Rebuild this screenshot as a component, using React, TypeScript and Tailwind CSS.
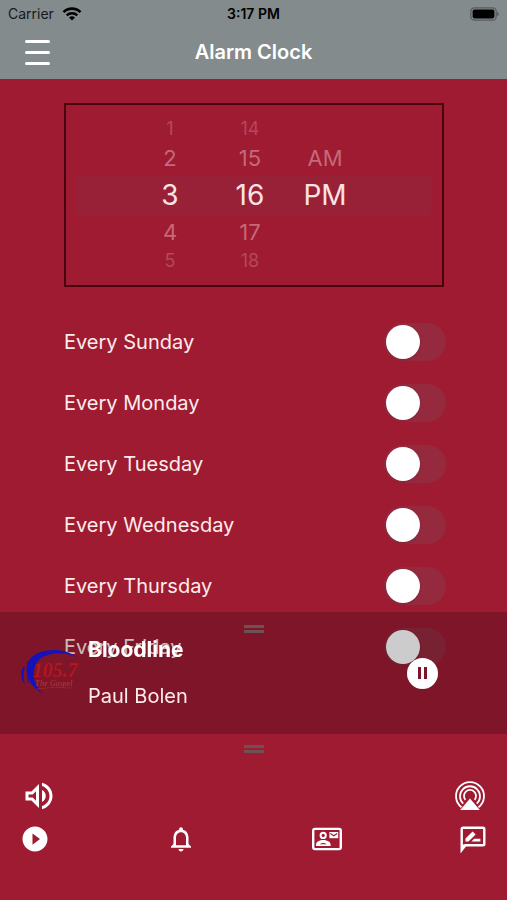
import { useState } from "react";
import {
  MdNotificationsNone,
  MdOutlineVolumeUp,
  MdPlayCircleFilled,
} from "react-icons/md";

const DAYS = ["Sunday", "Monday", "Tuesday", "Wednesday", "Thursday", "Friday"];

const WHEELS = [
  { label: "Hour", width: "w-20", values: ["1", "2", "3", "4", "5"] },
  { label: "Minute", width: "w-20", values: ["14", "15", "16", "17", "18"] },
  { label: "Period", width: "w-[70px]", values: ["", "AM", "PM", "", ""] },
];

const WHEEL_ROWS = [
  "h-6 text-lg text-[#b5485b]",
  "h-[34px] text-[22px] text-[#c5697a]",
  "h-10 text-[28px] text-[#fbe3e4]",
  "h-[34px] text-[22px] text-[#c5697a]",
  "h-6 text-lg text-[#b5485b]",
];

function StatusBar() {
  return (
    <div className="grid h-[27px] grid-cols-3 items-center px-2 text-sm text-[#15191b]">
      <div className="flex items-center gap-2">
        <span>Carrier</span>
        <svg className="h-[14px] w-[20px]" viewBox="0 0 20 14" fill="none" stroke="#000" aria-label="Wi-Fi">
          <path d="M1.5 5.2 A12 12 0 0 1 18.5 5.2" strokeWidth="2.6" />
          <path d="M4.7 8.4 A7.6 7.6 0 0 1 15.3 8.4" strokeWidth="2.4" />
          <path d="M10 13.5 L7 10.6 A4.4 4.4 0 0 1 13 10.6 Z" fill="#000" stroke="none" />
        </svg>
      </div>
      <span className="text-center font-semibold text-black">3:17 PM</span>
      <svg className="h-[14px] w-[30px] justify-self-end" viewBox="0 0 30 14" aria-label="Battery full">
        <rect x="1.8" y="0.8" width="25.4" height="12.4" rx="3.6" fill="none" stroke="#555c5e" strokeWidth="1.3" />
        <rect x="3.6" y="2.6" width="21.8" height="8.8" rx="1.8" fill="#000" />
        <path d="M28.2 4.8 Q30 5.6 30 7 Q30 8.4 28.2 9.2 Z" fill="#555c5e" />
      </svg>
    </div>
  );
}

function TimePicker() {
  return (
    <div className="relative mr-[2px] flex justify-center border-2 border-[#4a0410] py-3 pr-[18px]">
      <div className="absolute inset-x-[10px] top-[70px] h-[41px] rounded-md bg-[#982138]" />
      {WHEELS.map((wheel) => (
        <ul key={wheel.label} role="listbox" aria-label={wheel.label} className={`relative ${wheel.width}`}>
          {wheel.values.map((value, i) => (
            <li
              key={i}
              role="option"
              aria-selected={i === 2}
              className={`flex items-center justify-center ${WHEEL_ROWS[i]}`}
            >
              {value}
            </li>
          ))}
        </ul>
      ))}
    </div>
  );
}

function DayRow({ day }: { day: string }) {
  const [on, setOn] = useState(false);
  return (
    <li>
      <label className="flex h-[61px] items-center justify-between text-xl text-[#fdecec]">
        Every {day}
        <input
          type="checkbox"
          role="switch"
          checked={on}
          onChange={(e) => setOn(e.target.checked)}
          className="h-[38px] w-[62px] appearance-none rounded-full bg-[#952a3f] p-[2px] before:block before:size-[34px] before:rounded-full before:bg-white before:shadow-sm checked:bg-green-500 checked:before:ml-6"
        />
      </label>
    </li>
  );
}

function Grip() {
  return (
    <div className="mx-auto flex w-5 flex-col gap-[2px]">
      <div className="h-[3px] bg-[#6e5154]" />
      <div className="h-[3px] bg-[#6e5154]" />
    </div>
  );
}

function StationLogo() {
  return (
    <svg className="h-12 w-[60px] shrink-0" viewBox="0 0 60 48" aria-label="105.7 The Gospel">
      <path d="M56 8 C46 -1 20 -2 10 10 C2 20 8 38 24 45 C13 36 11 24 17 13 C25 3 44 2 56 8 Z" fill="#1512b8" />
      <path d="M3 18 C0 24 1 31 5 35 C3 29 3 24 5 18 Z" fill="#1512b8" />
      <path d="M8 12 V34" stroke="#1512b8" strokeWidth="1" />
      <text x="13" y="28" fontSize="20" fontStyle="italic" fontWeight="bold" fontFamily="Liberation Serif, serif" fill="#b8161f">105.7</text>
      <text x="15" y="37" fontSize="8" fontStyle="italic" fontWeight="bold" fontFamily="Liberation Serif, serif" fill="#a3303a">The Gospel</text>
      <path d="M17 40 Q34 37 52 39" stroke="#a3202c" strokeWidth="1" fill="none" />
    </svg>
  );
}

function NowPlaying() {
  return (
    <section className="h-[122px] bg-black/20 pt-[13px]">
      <Grip />
      <div className="mt-[3px] flex items-center pl-5 pr-[69px] text-xl text-[#fdecec]">
        <StationLogo />
        <div className="ml-2 flex flex-1 flex-col gap-[18px]">
          <p className="text-[21px] leading-7 font-bold text-white">Bloodline</p>
          <p>Paul Bolen</p>
        </div>
        <button aria-label="Pause" className="flex size-[31px] items-center justify-center gap-[3px] rounded-full bg-white">
          <span className="h-3 w-[3px] bg-[#7c1626]" />
          <span className="h-3 w-[3px] bg-[#7c1626]" />
        </button>
      </div>
    </section>
  );
}

function AirPlayIcon() {
  return (
    <svg className="size-9" viewBox="0 0 36 36" fill="none" stroke="currentColor" strokeWidth="1.8">
      <path d="M9.5 29.2 A14 14 0 1 1 26.5 29.2" />
      <path d="M11.2 25.6 A10 10 0 1 1 24.8 25.6" />
      <path d="M13.4 21.8 A6 6 0 1 1 22.6 21.8" />
      <path d="M18 20.4 L27.8 32 H8.2 Z" fill="currentColor" stroke="none" />
    </svg>
  );
}

function ContactIcon() {
  return (
    <svg className="size-[30px]" viewBox="0 0 30 30" fill="currentColor">
      <rect x="1.2" y="4.9" width="27.6" height="20.2" rx="1.8" fill="none" stroke="currentColor" strokeWidth="2.4" />
      <circle cx="11.2" cy="11.4" r="2.6" fill="none" stroke="currentColor" strokeWidth="2" />
      <path d="M4 22 V20.6 C4 17.6 8 16 11.2 16 C14.4 16 18.6 17.6 18.6 20.6 V22 Z" />
      <path d="M7.6 20.2 Q11.2 17.6 14.8 20.2 Z" fill="#9f1b32" />
      <path d="M17.4 8 H26.2 V14.2 H17.4 Z" />
      <path d="M18.4 9.4 L21.8 11.8 L25.2 9.4" fill="none" stroke="#9f1b32" strokeWidth="1.2" />
    </svg>
  );
}

function ReviewIcon() {
  return (
    <svg className="size-[30px]" viewBox="0 0 30 30" fill="currentColor">
      <path d="M3.7 26 V5 Q3.7 3.7 5 3.7 H25 Q26.3 3.7 26.3 5 V20 Q26.3 21.3 25 21.3 H7.4 Z" fill="none" stroke="currentColor" strokeWidth="2.4" />
      <path d="M3 27.5 V20.5 H9.5 Z" />
      <path d="M7.5 17.6 V14.6 L14.6 7.5 L17.6 10.5 L10.5 17.6 Z" />
      <path d="M13.4 17.6 L16.2 14.8 H22.4 V17.6 Z" />
    </svg>
  );
}

function BottomPanel() {
  return (
    <section className="h-[166px] bg-[#9f1b32] pt-[11px] text-white">
      <Grip />
      <div className="mt-[25px] flex justify-between pl-[21px] pr-[19px]">
        <button aria-label="Volume"><MdOutlineVolumeUp className="size-9" /></button>
        <button aria-label="AirPlay"><AirPlayIcon /></button>
      </div>
      <nav className="mt-[10px] flex justify-between pl-5 pr-[19px]">
        <button aria-label="Play"><MdPlayCircleFilled className="size-[30px]" /></button>
        <button aria-label="Alarms"><MdNotificationsNone className="size-[30px]" /></button>
        <button aria-label="Contact"><ContactIcon /></button>
        <button aria-label="Review"><ReviewIcon /></button>
      </nav>
    </section>
  );
}

export default function App() {
  return (
    <div className="relative min-h-screen bg-[#9f1b32] font-['Inter',sans-serif]">
      <header className="bg-[#838b8d]">
        <StatusBar />
        <div className="grid h-[52px] grid-cols-[48px_1fr_48px] items-center px-3 pb-[2px]">
          <button aria-label="Menu" className="ml-[13px] flex w-[25px] flex-col gap-2">
            <span className="h-[3px] rounded-sm bg-white" />
            <span className="h-[3px] rounded-sm bg-white" />
            <span className="h-[3px] rounded-sm bg-white" />
          </button>
          <h1 className="text-center text-xl font-semibold text-white">Alarm Clock</h1>
        </div>
      </header>
      <main className="pb-[222px] pl-16 pr-[61px] pt-6">
        <TimePicker />
        <ul className="mt-6">
          {DAYS.map((day) => (
            <DayRow key={day} day={day} />
          ))}
        </ul>
      </main>
      <footer className="fixed inset-x-0 bottom-0">
        <NowPlaying />
        <BottomPanel />
      </footer>
    </div>
  );
}
